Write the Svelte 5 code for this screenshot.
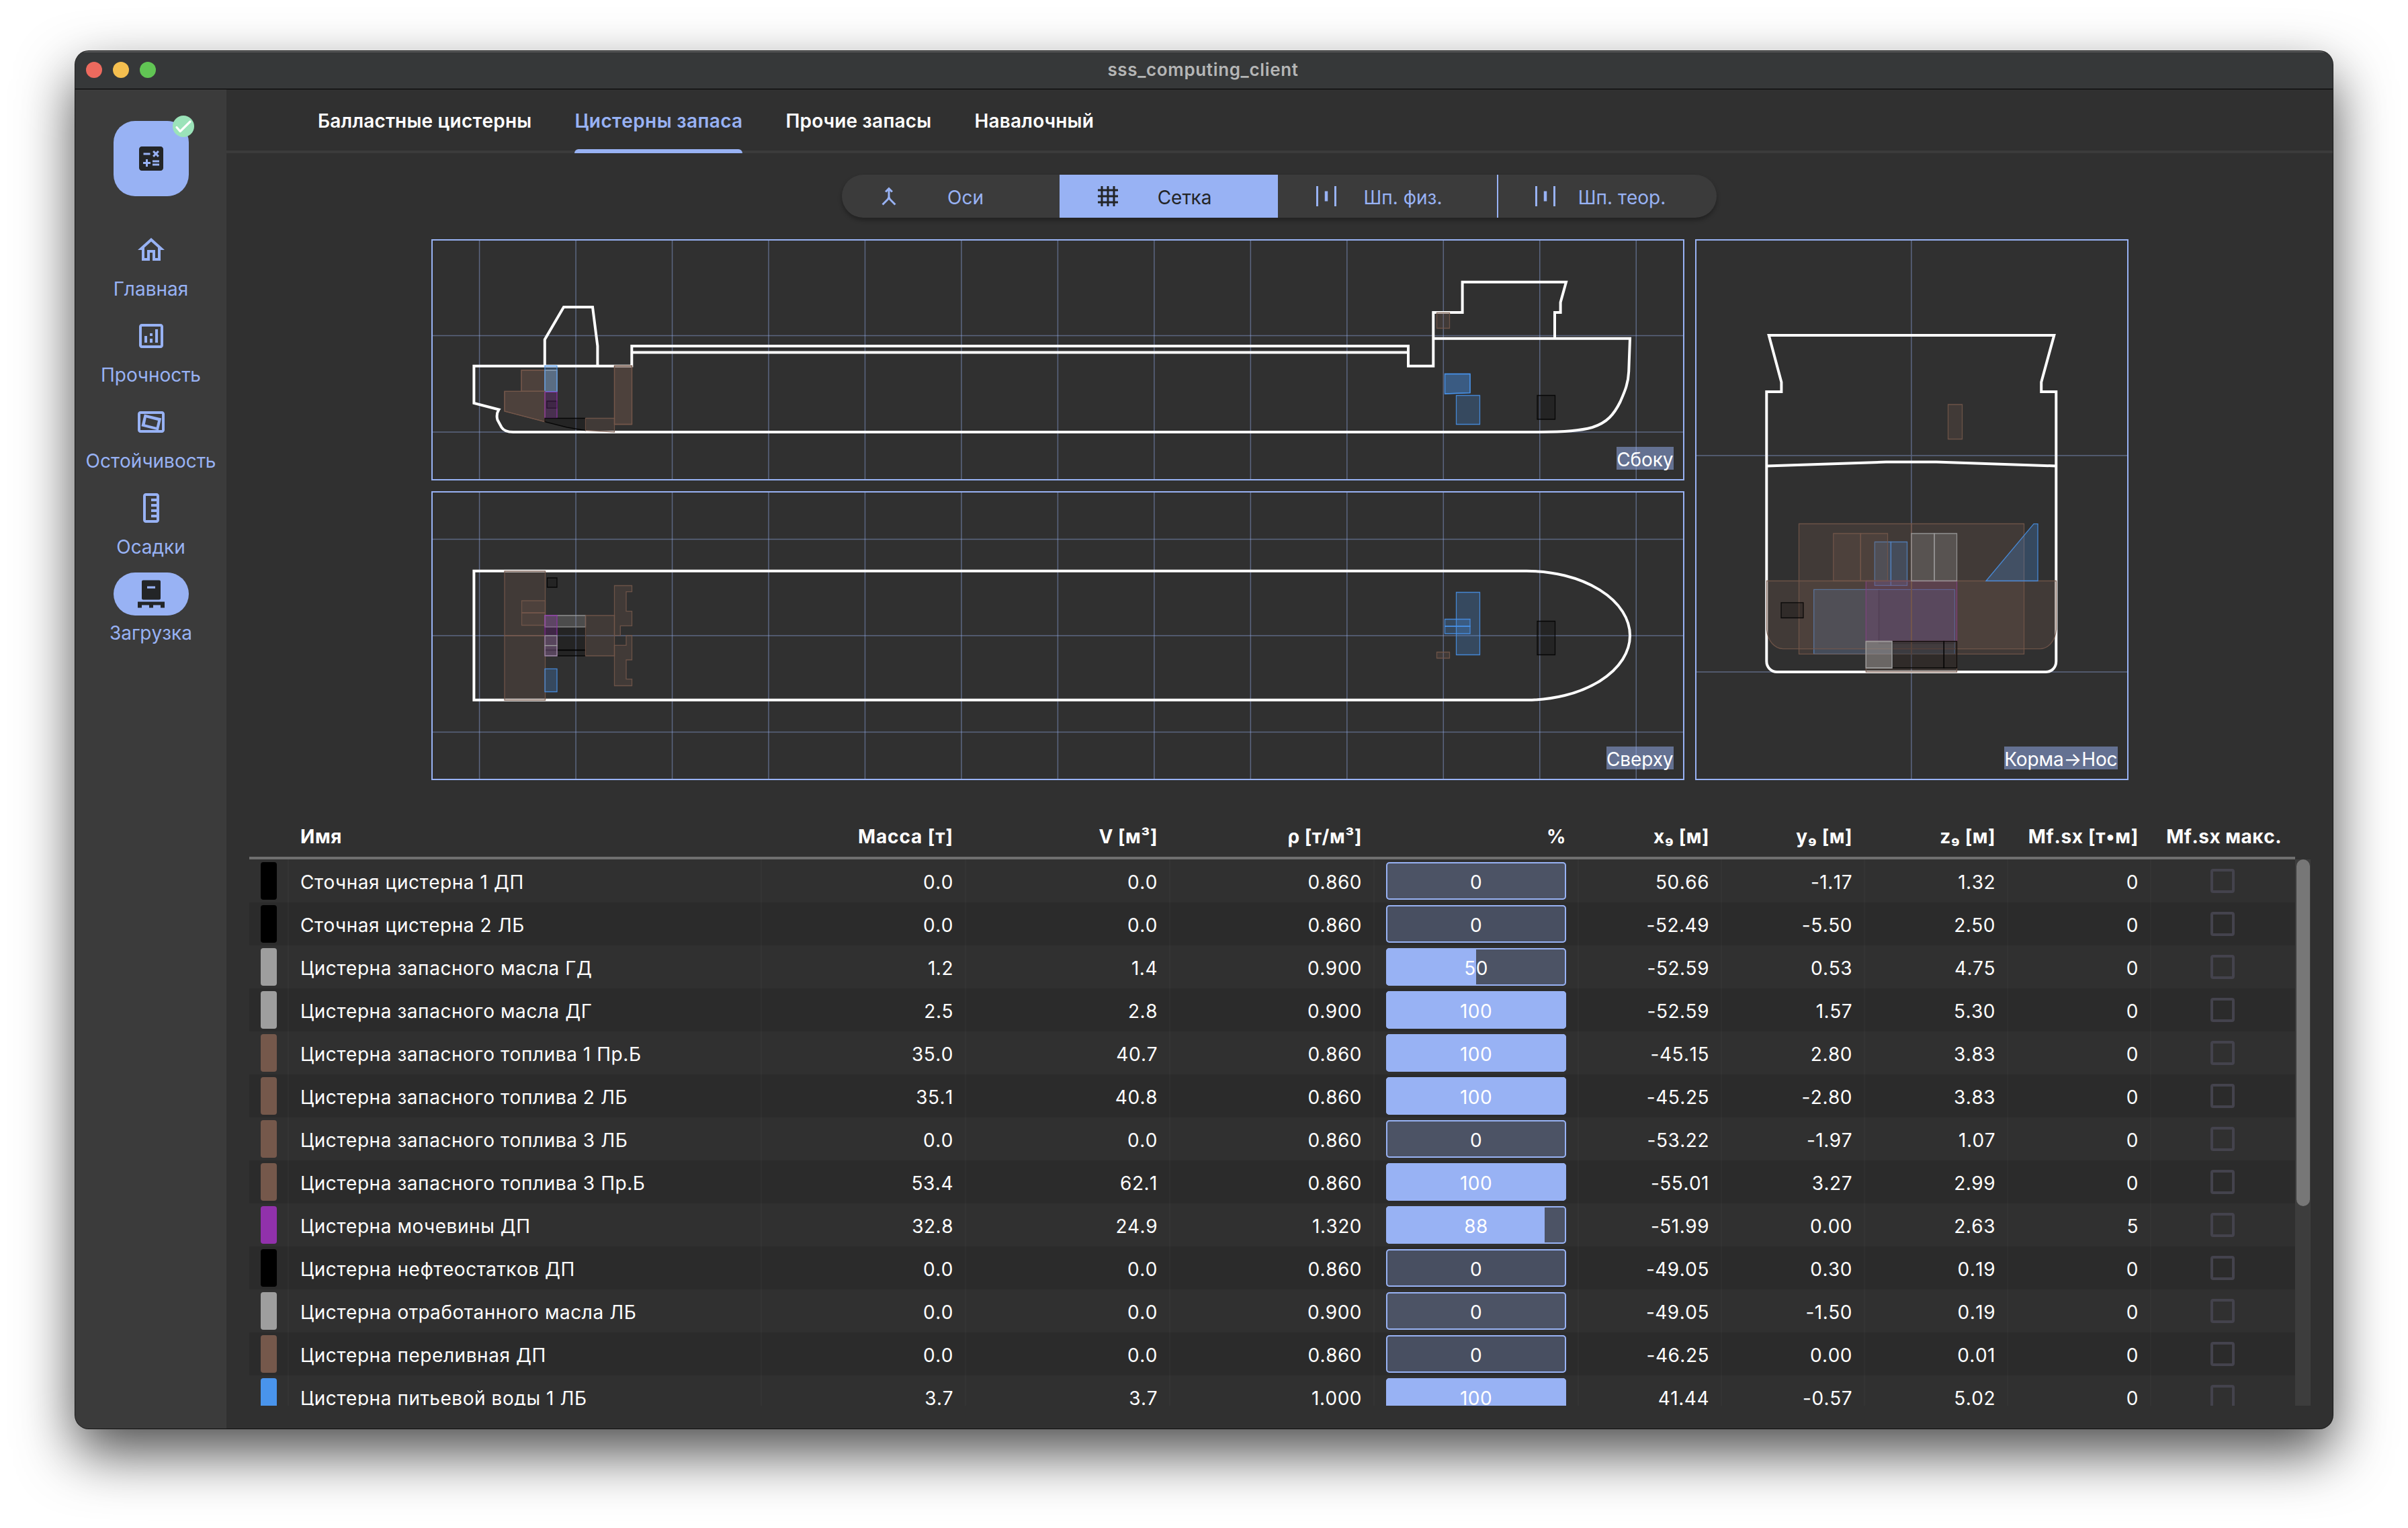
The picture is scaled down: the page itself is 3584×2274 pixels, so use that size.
<script>
  const tabs = ['Балластные цистерны', 'Цистерны запаса', 'Прочие запасы', 'Навалочный'];

  const nav = [
    { id: 'home', label: 'Главная' },
    { id: 'strength', label: 'Прочность' },
    { id: 'stability', label: 'Остойчивость' },
    { id: 'drafts', label: 'Осадки' },
    { id: 'loading', label: 'Загрузка' },
  ];

  const modes = [
    { id: 'axes', label: 'Оси' },
    { id: 'grid', label: 'Сетка' },
    { id: 'frames', label: 'Шп. физ.' },
    { id: 'theor', label: 'Шп. теор.' },
  ];

  const headers = ['', 'Имя', 'Масса [т]', 'V [м³]', 'ρ [т/м³]', '%', 'x₉ [м]', 'y₉ [м]', 'z₉ [м]', 'Mf.sx [т•м]', 'Mf.sx макс.'];

  const rows = [
    ['black', 'Сточная цистерна 1 ДП', '0.0', '0.0', '0.860', 0, '50.66', '-1.17', '1.32', '0'],
    ['black', 'Сточная цистерна 2 ЛБ', '0.0', '0.0', '0.860', 0, '-52.49', '-5.50', '2.50', '0'],
    ['grey', 'Цистерна запасного масла ГД', '1.2', '1.4', '0.900', 50, '-52.59', '0.53', '4.75', '0'],
    ['grey', 'Цистерна запасного масла ДГ', '2.5', '2.8', '0.900', 100, '-52.59', '1.57', '5.30', '0'],
    ['brown', 'Цистерна запасного топлива 1 Пр.Б', '35.0', '40.7', '0.860', 100, '-45.15', '2.80', '3.83', '0'],
    ['brown', 'Цистерна запасного топлива 2 ЛБ', '35.1', '40.8', '0.860', 100, '-45.25', '-2.80', '3.83', '0'],
    ['brown', 'Цистерна запасного топлива 3 ЛБ', '0.0', '0.0', '0.860', 0, '-53.22', '-1.97', '1.07', '0'],
    ['brown', 'Цистерна запасного топлива 3 Пр.Б', '53.4', '62.1', '0.860', 100, '-55.01', '3.27', '2.99', '0'],
    ['purple', 'Цистерна мочевины ДП', '32.8', '24.9', '1.320', 88, '-51.99', '0.00', '2.63', '5'],
    ['black', 'Цистерна нефтеостатков ДП', '0.0', '0.0', '0.860', 0, '-49.05', '0.30', '0.19', '0'],
    ['grey', 'Цистерна отработанного масла ЛБ', '0.0', '0.0', '0.900', 0, '-49.05', '-1.50', '0.19', '0'],
    ['brown', 'Цистерна переливная ДП', '0.0', '0.0', '0.860', 0, '-46.25', '0.00', '0.01', '0'],
    ['blue', 'Цистерна питьевой воды 1 ЛБ', '3.7', '3.7', '1.000', 100, '41.44', '-0.57', '5.02', '0'],
  ];

  const gridX = Array.from({ length: 13 }, (_, i) => 713.6 + i * 143.47);

  // Tank shapes per projection: colour class and outline points.
  const box = (x1, y1, x2, y2) => `${x1},${y1} ${x2},${y1} ${x2},${y2} ${x1},${y2}`;

  const sideTanks = [
    ['brown', box(776, 551, 811, 582.3)],
    ['brown', box(776, 551, 811, 582.3)],
    ['grey', box(811, 551, 829, 582.7)],
    ['grey', box(811, 551, 829, 582.7)],
    ['blue', box(811, 544.5, 829, 582.7)],
    ['brown', '751,582.3 811,582.3 811,627.7 751,612'],
    ['brown', '751,582.3 811,582.3 811,627.7 751,612'],
    ['black', box(814, 597, 829, 607.3)],
    ['purple', box(811, 583.3, 829, 622.3)],
    ['black', '811,622.5 871.5,622.5 871.5,640.7 844,636 811,627.7'],
    ['brown', '871.5,622.5 914.5,622.5 914.5,643 871.5,640.5'],
    ['brown', box(914.5, 544.5, 940.5, 631.5)],
    ['brown', box(914.5, 544.5, 940.5, 631.5)],
    ['brown', box(2138.5, 465.5, 2157.5, 488.5)],
    ['blue', '2150.5,556.5 2188,556.5 2188,584.7 2150.5,586'],
    ['blue', '2150.5,556.5 2188,556.5 2188,584.7 2150.5,586'],
    ['blue', box(2167.5, 588.5, 2202.5, 631.5)],
    ['black', box(2288, 588.5, 2314.5, 624)],
  ];

  const topTanks = [
    ['brown', box(751, 850, 811.5, 946)],
    ['brown', box(751, 946, 811.5, 1042)],
    ['brown', box(776.5, 894, 811.5, 912)],
    ['brown', box(776.5, 912, 811.5, 930.5)],
    ['black', box(814.5, 860, 829, 874)],
    ['black', box(811, 933, 871.5, 967.5)],
    ['black', box(811, 967.5, 871.5, 976)],
    ['grey', box(811, 916, 871.5, 933)],
    ['purple', box(811, 916, 829, 976)],
    ['grey', box(811, 946, 829, 960.7)],
    ['grey', box(811, 960.7, 829, 976)],
    ['blue', box(811, 995.3, 829, 1029.5)],
    ['brown', box(871.5, 916, 914.5, 976)],
    ['brown', '914.5,871.5 940.5,871.5 940.5,880.7 932,880.7 932,909.7 940.5,909.7 940.5,931.3 923.3,931.3 923.3,945.7 914.5,945.7'],
    ['brown', '932,945.7 940.5,945.7 940.5,982 932,982 932,1010.7 940.5,1010.7 940.5,1020.5 914.5,1020.5 914.5,960.3 932,960.3'],
    ['blue', box(2167.5, 881.5, 2202.5, 974.5)],
    ['blue', box(2150.5, 921.5, 2188, 932)],
    ['blue', box(2150.5, 932, 2188, 943)],
    ['brown', box(2138.5, 970.5, 2157.5, 979.5)],
    ['black', box(2288, 924.5, 2314.5, 974.5)],
  ];

  // Drawn beneath the wide aft fuel tanks.
  const frontBack = [
    ['black', box(2796.5, 877.3, 2909.3, 957.5)],
    ['blue', box(2699.7, 877.3, 2909.3, 973.3)],
    ['blue', box(2790.3, 806.5, 2814.4, 871.3)],
    ['blue', box(2814.4, 806.5, 2838.5, 871.3)],
    ['purple', box(2777.3, 864.5, 2912.5, 954.5)],
    ['brown', box(2677.5, 779.5, 2844.8, 973.3)],
    ['brown', box(2844.8, 779.5, 3012.5, 973.3)],
  ];

  const frontTanks = [
    ['black', box(2651, 896.8, 2684, 919.5)],
    ['brown', box(2899.5, 602, 2920.5, 653.5)],
    ['brown', box(2728.8, 794, 2769.3, 864.5)],
    ['brown', box(2769.3, 794, 2809.5, 864.5)],
    ['grey', box(2844.8, 794, 2879, 864.5)],
    ['grey', box(2879, 794, 2912.5, 864.5)],
    ['blue', '2956,864.5 3027,779.7 3033,779.7 3033,864.5'],
    ['brown', box(2777.3, 954.5, 2912.5, 1000)],
    ['black', box(2816.5, 954.5, 2893.3, 994)],
    ['black', box(2893.3, 954.5, 2912.5, 994)],
    ['grey', box(2777.3, 954.5, 2816, 994)],
    ['grey', box(2777.3, 954.5, 2816, 994)],
  ];
</script>

<div class="desktop">
  <div class="window">
    <header class="titlebar">
      <div class="lights"><i class="red"></i><i class="yellow"></i><i class="green"></i></div>
      <span class="title">sss_computing_client</span>
    </header>

    <div class="body">
      <aside class="sidebar">
        <button class="fab" aria-label="Расчёт">
          <svg class="icon24" viewBox="0 0 24 24"><path d="M19,3H5C3.9,3,3,3.9,3,5v14c0,1.1,.9,2,2,2h14c1.1,0,2-.9,2-2V5C21,3.9,20.1,3,19,3z M13.03,7.06L14.09,6l1.41,1.41L16.91,6l1.06,1.06l-1.41,1.41l1.41,1.41l-1.06,1.06L15.5,9.54l-1.41,1.41l-1.06-1.06l1.41-1.41L13.03,7.06z M6.25,7.72h5v1.5h-5V7.72z M11.5,16h-2v2H8v-2H6v-1.5h2v-2h1.5v2h2V16z M18,17.25h-5v-1.5h5V17.25z M18,14.75h-5v-1.5h5V14.75z" /></svg>
          <svg class="badge" viewBox="0 0 32 32"><circle cx="16" cy="16" r="16" /><path d="M6 17.5 L11.2 23.5 L26 9" /></svg>
        </button>
        <nav>
          {#each nav as item}
            <div class="nav-item" class:active={item.id === 'loading'}>
              <div class="pill">
                <svg class="icon24" viewBox="0 0 24 24">
                  {#if item.id === 'home'}
                    <path d="M12 5.69l5 4.5V18h-2v-6H9v6H7v-7.81l5-4.5M12 3L2 12h3v8h6v-6h2v6h6v-8h3L12 3z" />
                  {:else if item.id === 'strength'}
                    <path d="M19 3H5c-1.1 0-2 .9-2 2v14c0 1.1.9 2 2 2h14c1.1 0 2-.9 2-2V5c0-1.1-.9-2-2-2zm0 16H5V5h14v14zM7 12h2v5H7zM15 7h2v10h-2zM11 14h2v3h-2zM11 10h2v2h-2z" />
                  {:else if item.id === 'stability'}
                    <path fill-rule="evenodd" d="M20 4H4c-1.1 0-2 .9-2 2v12c0 1.1.9 2 2 2h16c1.1 0 2-.9 2-2V6c0-1.1-.9-2-2-2zm0 14H4V6h16v12z" />
                    <path fill-rule="evenodd" d="M6.9 6.3L19.6 9.3L17.4 18.3L4.7 15.1zM8.4 8.8L7.4 13.7L15.9 15.9L17 11z" />
                  {:else if item.id === 'drafts'}
                    <path transform="rotate(90 12 12)" d="M21 6H3c-1.1 0-2 .9-2 2v8c0 1.1.9 2 2 2h18c1.1 0 2-.9 2-2V8c0-1.1-.9-2-2-2zm0 10H3V8h2v4h2V8h2v4h2V8h2v4h2V8h2v4h2V8h2v8z" />
                  {:else}
                    <path fill-rule="evenodd" d="M6 1.8h12a1 1 0 0 1 1 1v12.4a1 1 0 0 1-1 1H6a1 1 0 0 1-1-1V2.8a1 1 0 0 1 1-1zM9 6.2v1.7h6V6.2zM2 17.8h20v4.4h-3v-2h-5.5v2h-3v-2H5v2H2z" />
                  {/if}
                </svg>
              </div>
              <span>{item.label}</span>
            </div>
          {/each}
        </nav>
      </aside>

      <main>
        <div class="tabs">
          {#each tabs as tab, i}
            <div class="tab" class:active={i === 1}><span>{tab}</span></div>
          {/each}
        </div>

        <div class="modes">
          {#each modes as mode}
            <div class="mode {mode.id}">
              <svg class="icon18" viewBox="0 0 24 24">
                {#if mode.id === 'axes'}
                  <path d="M6.41 21L5 19.59l4.83-4.83c.75-.75 1.17-1.77 1.17-2.83v-5.1L9.41 8.41 8 7l4-4 4 4-1.41 1.41L13 6.83v5.1c0 1.06.42 2.08 1.17 2.83L19 19.59 17.59 21 12 15.41 6.41 21z" />
                {:else if mode.id === 'grid'}
                  <path d="M22,7V5h-3V2h-2v3h-4V2h-2v3H7V2H5v3H2v2h3v4H2v2h3v4H2v2h3v3h2v-3h4v3h2v-3h4v3h2v-3h3v-2h-3v-4h3v-2h-3V7H22z M7,7h4v4H7V7z M7,17v-4h4v4H7z M17,17h-4v-4h4V17z M17,11h-4V7h4V11z" />
                {:else}
                  <path d="M4 22H2V2h2v20zM22 2h-2v20h2V2zM13.5 7h-3v10h3V7z" />
                {/if}
              </svg>
              <span>{mode.label}</span>
            </div>
          {/each}
        </div>

        <div class="views">
          <div class="left-views">
            <div class="view side">
              <svg viewBox="644 358 1861 355">
                <g class="grid-lines">
                  {#each gridX as x}<path d="M{x} 350V720" />{/each}
                  <path d="M640 499.4H2510M640 643H2510" />
                </g>
                <g class="hull">
                  <path d="M940.3 544.7H705.4V600L742.5 609.5C739 615 739 620 740.5 625L746.5 636C749 640 754 643 764 643H2290C2330 642.5 2352 641 2370 636C2392 629 2402 617 2411.5 598C2419 581 2423.5 570 2424.2 553L2426 503.7H2133.3" />
                  <path d="M940.3 546.5V515H2096V544.7H2133.3V465H2176.6V419.7H2331L2322.6 450V465H2314V503" />
                  <path d="M940.3 524.5H2096" />
                  <path d="M810.8 544V505.3L839 457H882L889.4 515V544" />
                </g>
                {#each sideTanks as [c, pts]}<polygon class="tank {c}" points={pts} />{/each}
              </svg>
              <span class="tag">Сбоку</span>
            </div>
            <div class="view top">
              <svg viewBox="644 733 1861 426">
                <g class="grid-lines">
                  {#each gridX as x}<path d="M{x} 730V1170" />{/each}
                  <path d="M640 802.4H2510M640 946H2510M640 1089.5H2510" />
                </g>
                <path class="hull" d="M705.4 849.8H2272A154 96 0 0 1 2272 1041.8H705.4Z" />
                {#each topTanks as [c, pts]}<polygon class="tank {c}" points={pts} />{/each}
              </svg>
              <span class="tag">Сверху</span>
            </div>
          </div>
          <div class="view front">
            <svg viewBox="2525 358 641 801">
              <path class="grid-lines" d="M2844.8 350V1170M2520 678H3170M2520 1000H3170" />
              <g class="hull">
                <path d="M2632.7 499H3057.3L3038.2 568.7V583H3060.3V984C3060.3 993 3054 1000 3045 1000H2645C2636 1000 2629.3 993 2629.3 984V583H2651.4V568.7Z" />
                <path d="M2630 693.5L2807 687.6H2882L3060 693.5" />
              </g>
              {#each frontBack as [c, pts]}<polygon class="tank {c}" points={pts} />{/each}
              <path class="tank brown" d="M2629.5 864.5H2844.8V965.6H2654C2641 965 2631 954 2629.5 937Z" />
              <path class="tank brown" d="M3060.5 864.5H2844.8V965.6H3036C3049 965 3059 954 3060.5 937Z" />
              {#each frontTanks as [c, pts]}<polygon class="tank {c}" points={pts} />{/each}
            </svg>
            <span class="tag">Корма→Нос</span>
          </div>
        </div>

        <div class="table">
          <div class="row head">
            {#each headers as h}<div class="cell"><span>{h}</span></div>{/each}
          </div>
          <div class="scroll">
            <div class="rows">
              {#each rows as [color, name, mass, vol, rho, pct, x, y, z, mf]}
                <div class="row">
                  <div class="cell"><i class="swatch {color}"></i></div>
                  <div class="cell"><span>{name}</span></div>
                  <div class="cell"><span>{mass}</span></div>
                  <div class="cell"><span>{vol}</span></div>
                  <div class="cell"><span>{rho}</span></div>
                  <div class="cell level">
                    <div class="bar"><i style="width: {pct}%"></i><span>{pct}</span></div>
                  </div>
                  <div class="cell"><span>{x}</span></div>
                  <div class="cell"><span>{y}</span></div>
                  <div class="cell"><span>{z}</span></div>
                  <div class="cell"><span>{mf}</span></div>
                  <div class="cell check"><i></i></div>
                </div>
              {/each}
            </div>
            <div class="track"><div class="thumb"></div></div>
          </div>
        </div>
      </main>
    </div>
  </div>
</div>

<style>
  :global(body) {
    background: #fff;
  }
  .desktop {
    box-sizing: border-box;
    width: 3584px;
    height: 2274px;
    padding: 76px 112px 0;
    overflow: hidden;
    font-family: Inter, "Noto Sans", sans-serif;
    font-size: 28px;
    font-kerning: none;
    color: #fff;
  }
  .window {
    display: flex;
    flex-direction: column;
    width: 3360px;
    height: 2050px;
    border-radius: 20px;
    overflow: hidden;
    background: #303030;
    box-shadow: 0 0 0 1px rgba(0, 0, 0, 0.85), 0 36px 84px rgba(0, 0, 0, 0.7);
  }
  .titlebar {
    display: grid;
    grid-template-columns: 1fr auto 1fr;
    align-items: center;
    box-sizing: border-box;
    height: 57px;
    border-bottom: 1px solid #000;
    box-shadow: inset 0 2px 0 #58595a;
    background: #363839;
    flex: none;
  }
  .lights {
    display: flex;
    gap: 16px;
    padding-left: 16px;
  }
  .lights i {
    width: 24px;
    height: 24px;
    border-radius: 50%;
  }
  .red { background: #ed6a5e; }
  .yellow { background: #f5bf4f; }
  .green { background: #61c554; }
  .title {
    margin: -1px 3px 0 0;
    font-size: 26px;
    font-weight: 600;
    letter-spacing: 0.65px;
    line-height: 32px;
    color: #b5b6b6;
  }
  .body {
    display: flex;
    flex: 1;
    min-height: 0;
  }
  .sidebar {
    display: flex;
    flex-direction: column;
    align-items: center;
    box-sizing: border-box;
    width: 225px;
    padding-top: 47px;
    background: #3b3b3b;
    flex: none;
  }
  .icon24 {
    width: 48px;
    height: 48px;
    fill: currentColor;
  }
  .icon18 {
    width: 36px;
    height: 36px;
    fill: currentColor;
    flex: none;
  }
  .fab {
    position: relative;
    display: grid;
    place-items: center;
    width: 112px;
    height: 112px;
    padding: 0;
    border: 0;
    border-radius: 32px;
    background: #98b2f4;
    color: #232527;
  }
  .badge {
    position: absolute;
    top: -8px;
    right: -8px;
    width: 32px;
    height: 32px;
  }
  .badge circle { fill: #9be3b9; }
  .badge path {
    fill: none;
    stroke: #fff;
    stroke-width: 3.2;
    stroke-linecap: round;
    stroke-linejoin: round;
  }
  nav {
    display: flex;
    flex-direction: column;
    padding-top: 48px;
  }
  .nav-item {
    display: flex;
    flex-direction: column;
    align-items: center;
    height: 128px;
    color: #98b2f4;
  }
  .nav-item span {
    margin-top: 6px;
    line-height: 40px;
  }
  .pill {
    display: grid;
    place-items: center;
    width: 112px;
    height: 64px;
    border-radius: 32px;
  }
  .nav-item.active .pill {
    background: #98b2f4;
    color: #232527;
  }
  main {
    display: flex;
    flex-direction: column;
    flex: 1;
    min-width: 0;
  }
  .tabs {
    display: flex;
    box-sizing: border-box;
    height: 95px;
    padding-left: 104px;
    border-bottom: 4px solid #3b3b3b;
    flex: none;
  }
  .tab {
    padding: 0 32px;
    font-weight: 600;
    letter-spacing: 0.2px;
  }
  .tab span {
    display: block;
    height: 89px;
    line-height: 95px;
  }
  .tab.active {
    color: #98b2f4;
    letter-spacing: 0.38px;
  }
  .tab.active::after {
    content: "";
    display: block;
    height: 6px;
    border-radius: 6px 6px 0 0;
    background: #98b2f4;
  }
  .modes {
    display: flex;
    width: 1302px;
    height: 64px;
    margin: 32px 0 0 916px;
    border-radius: 32px;
    overflow: hidden;
    background: #3b3b3b;
    color: #98b2f4;
    box-shadow: 0 4px 6px rgba(0, 0, 0, 0.3);
    flex: none;
  }
  .mode {
    display: flex;
    align-items: center;
    box-sizing: border-box;
    padding-left: 52px;
    width: 326px;
  }
  .mode span {
    width: 192px;
    padding-top: 3px;
    text-align: center;
  }
  .mode.axes { width: 324px; }
  .mode.grid {
    width: 325px;
    padding-left: 54px;
    background: #98b2f4;
    color: #232527;
  }
  .mode.frames { padding-left: 54px; }
  .mode.theor { border-left: 2px solid #98b2f4; }
  .views {
    display: flex;
    justify-content: center;
    gap: 16px;
    margin-top: 32px;
    flex: none;
  }
  .left-views {
    display: flex;
    flex-direction: column;
    gap: 16px;
  }
  .view {
    position: relative;
    box-sizing: border-box;
    border: 2px solid #98b2f4;
    overflow: hidden;
  }
  .view svg {
    display: block;
    width: 100%;
    height: 100%;
  }
  .side { width: 1865px; height: 359px; }
  .top { width: 1865px; height: 430px; }
  .front { width: 645px; height: 805px; }
  .tag {
    position: absolute;
    right: 14px;
    bottom: 14px;
    height: 34px;
    background: rgba(152, 178, 244, 0.5);
    font-kerning: normal;
    letter-spacing: -0.1px;
    line-height: 39px;
  }
  .grid-lines {
    fill: none;
    stroke: #98b2f4;
    stroke-opacity: 0.42;
    stroke-width: 1.5;
  }
  .hull {
    fill: none;
    stroke: #fff;
    stroke-width: 4;
  }
  .tank {
    fill: currentColor;
    fill-opacity: 0.25;
    stroke: currentColor;
    stroke-opacity: 0.85;
    stroke-width: 1.3;
  }
  .tank.black { color: #000; }
  .tank.grey { color: #9e9e9e; }
  .tank.brown { color: #75584b; }
  .tank.purple { color: #9131ab; }
  .tank.blue { color: #4994ec; }
  .table {
    display: flex;
    flex-direction: column;
    margin: 50px 33px 0 34px;
  }
  .row {
    display: grid;
    grid-template-columns: 59px 704px 304px 304px 304px 304px 213px 213px 213px 213px 214px;
    height: 64px;
    width: 3045px;
  }
  .row:nth-child(even) { background: #2b2b2b; }
  .row.head {
    border-bottom: 4px solid #6f6f6f;
    font-weight: 700;
  }
  .cell {
    display: flex;
    align-items: center;
    justify-content: flex-end;
    box-sizing: border-box;
    padding: 3px 17px 0;
    border-right: 2px solid rgba(255, 255, 255, 0.025);
    letter-spacing: 0.5px;
    white-space: nowrap;
  }
  .cell:first-child {
    justify-content: center;
    padding: 0;
  }
  .cell:nth-child(2) {
    justify-content: flex-start;
    letter-spacing: 0.56px;
  }
  .cell:last-child { border-right: 0; }
  .row.head .cell { border-color: transparent; }
  .row.head .cell:last-child { padding-right: 20px; }
  .row.head .cell:nth-child(3) { letter-spacing: 0.95px; }
  .row.head .cell:nth-child(10) { letter-spacing: 0.7px; }
  .swatch {
    width: 24px;
    height: 56px;
    margin-right: -1px;
    border-radius: 4px;
  }
  .swatch.black { background: #000; }
  .swatch.grey { background: #9e9e9e; }
  .swatch.brown { background: #75584b; }
  .swatch.purple { background: #9131ab; }
  .swatch.blue { background: #4994ec; }
  .cell.level { padding: 0 17px; }
  .bar {
    position: relative;
    display: flex;
    align-items: center;
    justify-content: center;
    box-sizing: border-box;
    width: 269px;
    height: 56px;
    border-radius: 5px;
    overflow: hidden;
    background: rgba(152, 178, 244, 0.27);
    box-shadow: inset 0 0 0 2px #98b2f4;
  }
  .bar i {
    position: absolute;
    left: 0;
    top: 0;
    bottom: 0;
    background: #98b2f4;
  }
  .bar span {
    position: relative;
    padding-top: 3px;
  }
  .cell.check {
    justify-content: center;
    padding: 0 2px 0 0;
  }
  .check i {
    box-sizing: border-box;
    width: 36px;
    height: 36px;
    border: 4px solid #44434d;
    border-radius: 4px;
  }
  .scroll {
    display: flex;
    height: 813px;
    overflow: hidden;
  }
  .track {
    width: 23px;
    height: 813px;
    background: #3d3d3d;
  }
  .thumb {
    width: 20px;
    height: 516px;
    margin-left: 2px;
    border-radius: 10px;
    background: #777;
  }
</style>
